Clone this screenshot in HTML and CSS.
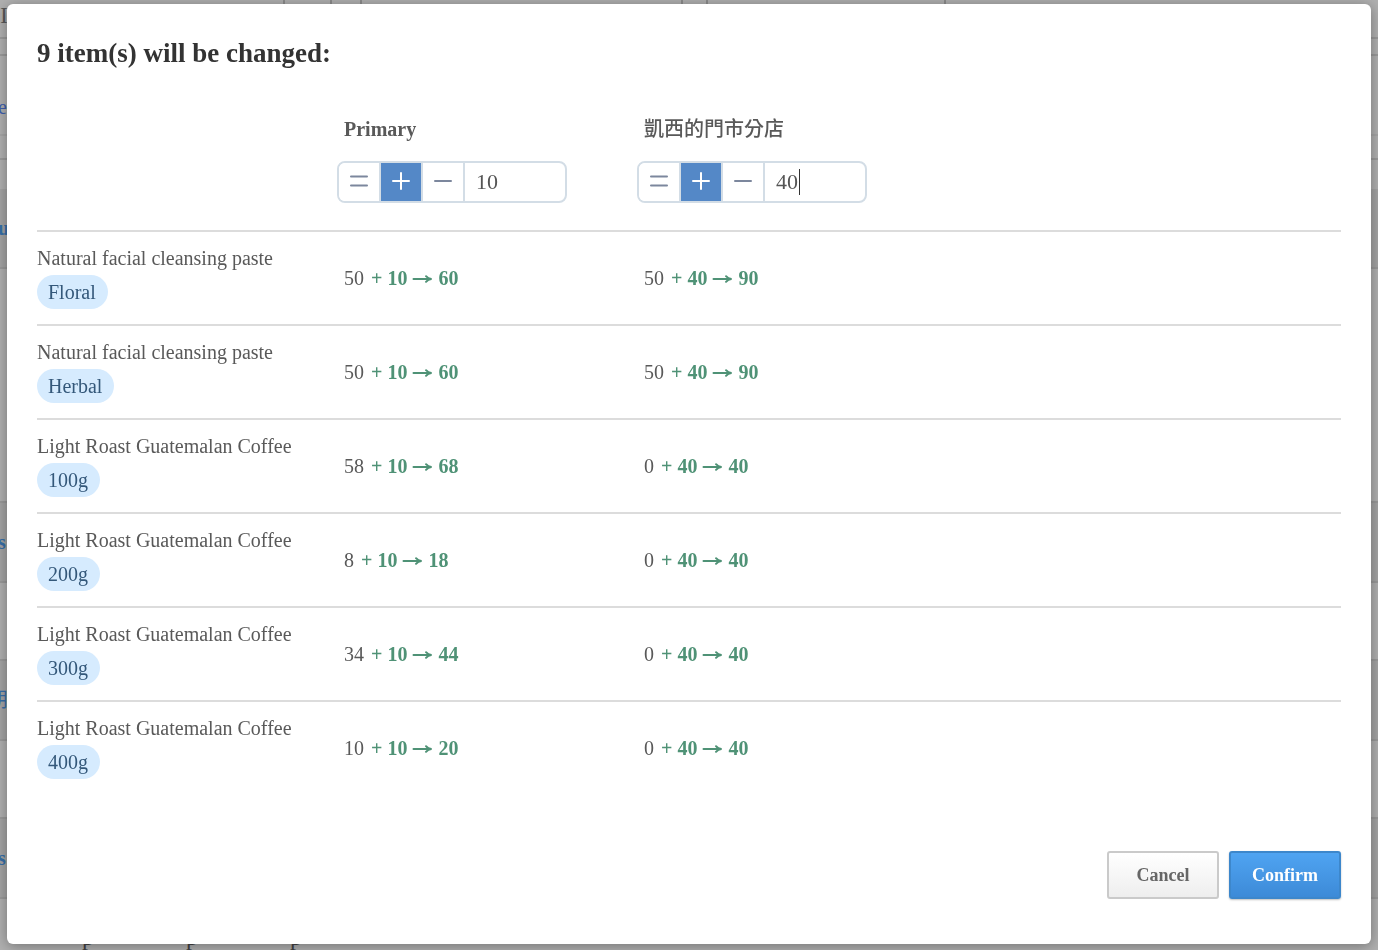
FILE: index.html
```html
<!DOCTYPE html>
<html lang="en">
<head>
    <meta charset="UTF-8">
    <meta name="viewport" content="width=device-width, initial-scale=1.0">
    <title>Update quantity</title>
    <link rel="stylesheet" href="styles.css">
</head>
<body>

    <svg width="0" height="0" class="sprite">
        <symbol id="arrow" viewBox="0 0 21 12"><path d="M1.5 6H19M14 3.2Q16 5.6 19.3 6Q16 6.4 14 8.8"/></symbol>
    </svg>

    <!-- product list behind the dialog -->
    <div class="page" aria-hidden="true">
        <div class="page-row toolbar">
            <span class="label">I</span>
            <span class="tab first"></span><span class="tab second"></span><span class="tab third"></span><span class="tab fourth"></span><span class="tab fifth"></span><span class="tab last"></span>
        </div>
        <div class="page-row thin"></div>
        <div class="page-row filters"><span class="link">e</span></div>
        <div class="page-row head"></div>
        <div class="page-gap"></div>
        <div class="page-row group"><span class="link bold">u</span></div>
        <div class="page-row tall"></div>
        <div class="page-row group"><span class="link bold">s</span></div>
        <div class="page-row item"></div>
        <div class="page-row group"><span class="link wide">朋</span></div>
        <div class="page-row item"></div>
        <div class="page-row group"><span class="link bold">s</span></div>
        <div class="page-foot"><span>p</span><span>p</span><span>p</span></div>
    </div>

    <div class="overlay">
        <div class="modal" role="dialog" aria-labelledby="modalTitle">
            <h1 id="modalTitle">9 item(s) will be changed:</h1>

            <table class="changes">
                <colgroup>
                    <col class="col-name">
                    <col class="col-stock">
                    <col class="col-stock">
                    <col>
                </colgroup>
                <thead>
                    <tr class="locations">
                        <td></td>
                        <th scope="col"><label for="qtyPrimary">Primary</label></th>
                        <th scope="col"><label for="qtyBranch" class="cjk">凱西的門市分店</label></th>
                        <td></td>
                    </tr>
                    <tr class="steppers">
                        <td></td>
                        <td>
                            <div class="stepper">
                                <button type="button" aria-label="Set to"><svg width="18" height="18" viewBox="0 0 18 18"><path d="M1 4.5h16M1 13.5h16"/></svg></button>
                                <button type="button" class="active" aria-label="Add"><svg width="18" height="18" viewBox="0 0 18 18"><path d="M1 9h16M9 1v16"/></svg></button>
                                <button type="button" aria-label="Subtract"><svg width="18" height="18" viewBox="0 0 18 18"><path d="M1 9h16"/></svg></button>
                                <input type="text" id="qtyPrimary" value="10">
                            </div>
                        </td>
                        <td>
                            <div class="stepper">
                                <button type="button" aria-label="Set to"><svg width="18" height="18" viewBox="0 0 18 18"><path d="M1 4.5h16M1 13.5h16"/></svg></button>
                                <button type="button" class="active" aria-label="Add"><svg width="18" height="18" viewBox="0 0 18 18"><path d="M1 9h16M9 1v16"/></svg></button>
                                <button type="button" aria-label="Subtract"><svg width="18" height="18" viewBox="0 0 18 18"><path d="M1 9h16"/></svg></button>
                                <input type="text" id="qtyBranch" value="40">
                                <span class="caret"></span>
                            </div>
                        </td>
                        <td></td>
                    </tr>
                </thead>
                <tbody>
                    <tr>
                        <td class="product"><div class="name">Natural facial cleansing paste</div><span class="tag">Floral</span></td>
                        <td class="stock">50 <strong>+ 10 <svg class="arrow" role="img" aria-label="to"><use href="#arrow"/></svg> 60</strong></td>
                        <td class="stock">50 <strong>+ 40 <svg class="arrow" role="img" aria-label="to"><use href="#arrow"/></svg> 90</strong></td>
                        <td></td>
                    </tr>
                    <tr>
                        <td class="product"><div class="name">Natural facial cleansing paste</div><span class="tag">Herbal</span></td>
                        <td class="stock">50 <strong>+ 10 <svg class="arrow" role="img" aria-label="to"><use href="#arrow"/></svg> 60</strong></td>
                        <td class="stock">50 <strong>+ 40 <svg class="arrow" role="img" aria-label="to"><use href="#arrow"/></svg> 90</strong></td>
                        <td></td>
                    </tr>
                    <tr>
                        <td class="product"><div class="name">Light Roast Guatemalan Coffee</div><span class="tag">100g</span></td>
                        <td class="stock">58 <strong>+ 10 <svg class="arrow" role="img" aria-label="to"><use href="#arrow"/></svg> 68</strong></td>
                        <td class="stock">0 <strong>+ 40 <svg class="arrow" role="img" aria-label="to"><use href="#arrow"/></svg> 40</strong></td>
                        <td></td>
                    </tr>
                    <tr>
                        <td class="product"><div class="name">Light Roast Guatemalan Coffee</div><span class="tag">200g</span></td>
                        <td class="stock">8 <strong>+ 10 <svg class="arrow" role="img" aria-label="to"><use href="#arrow"/></svg> 18</strong></td>
                        <td class="stock">0 <strong>+ 40 <svg class="arrow" role="img" aria-label="to"><use href="#arrow"/></svg> 40</strong></td>
                        <td></td>
                    </tr>
                    <tr>
                        <td class="product"><div class="name">Light Roast Guatemalan Coffee</div><span class="tag">300g</span></td>
                        <td class="stock">34 <strong>+ 10 <svg class="arrow" role="img" aria-label="to"><use href="#arrow"/></svg> 44</strong></td>
                        <td class="stock">0 <strong>+ 40 <svg class="arrow" role="img" aria-label="to"><use href="#arrow"/></svg> 40</strong></td>
                        <td></td>
                    </tr>
                    <tr>
                        <td class="product"><div class="name">Light Roast Guatemalan Coffee</div><span class="tag">400g</span></td>
                        <td class="stock">10 <strong>+ 10 <svg class="arrow" role="img" aria-label="to"><use href="#arrow"/></svg> 20</strong></td>
                        <td class="stock">0 <strong>+ 40 <svg class="arrow" role="img" aria-label="to"><use href="#arrow"/></svg> 40</strong></td>
                        <td></td>
                    </tr>
                </tbody>
            </table>

            <div class="actions">
                <button type="button" class="btn">Cancel</button>
                <button type="button" class="btn btn-primary">Confirm</button>
            </div>
        </div>
    </div>

</body>
</html>
```
FILE: styles.css
```css
* {
    box-sizing: border-box;
}

body {
    margin: 0;
    background-color: #b0b0b0;
    color: #595959;
    font-family: "Liberation Serif", "Noto Sans CJK TC", serif;
    font-size: 20px;
    overflow: hidden;
}

.sprite {
    display: block;
}

/* page behind */
.page {
    height: 100vh;
    overflow: hidden;
}

.page-row {
    display: flex;
    align-items: center;
    height: 79px;
    border-bottom: 2px solid #9a9a9a;
}

.page-row.toolbar {
    height: 39px;
    align-items: stretch;
}

.page-row.thin {
    height: 17px;
}

.page-row.filters {
    height: 80px;
    padding-top: 24px;
    border-color: #a6a6a6;
}

.page-row.head {
    height: 24px;
}

.page-gap {
    height: 29px;
}

.page-row.group {
    height: 80px;
    background-color: #a4a4a4;
}

.page-row.tall {
    height: 234px;
}

.page-row.item {
    height: 78px;
}

.label {
    width: 6px;
    line-height: 30px;
    font-size: 24px;
}

.tab {
    border-right: 2px solid #8c8c8c;
}

.tab.first {
    width: 279px;
}

.tab.second {
    width: 47px;
}

.tab.third {
    width: 30px;
}

.tab.fourth {
    width: 321px;
}

.tab.fifth {
    width: 25px;
}

.tab.last {
    width: 238px;
}

.link {
    margin-left: -2px;
    color: #3f5fae;
}

.link.bold {
    color: #376fa8;
    font-weight: bold;
}

.link.wide {
    margin-left: -12px;
    padding-bottom: 4px;
    color: #376fa8;
}

.page-foot {
    display: flex;
    gap: 92px;
    padding: 24px 82px;
    color: #444;
    font-size: 24px;
    line-height: 28px;
}

/* dialog */
.overlay {
    position: fixed;
    inset: 0;
    padding: 4px 7px 6px;
}

.modal {
    padding: 30px 30px 45px;
    background-color: #fff;
    border-radius: 6px;
    box-shadow: 0 2px 14px rgba(0, 0, 0, 0.35);
}

h1 {
    margin: 0 0 38px;
    color: #333;
    font-size: 27px;
    line-height: 38px;
}

.changes {
    width: 100%;
    table-layout: fixed;
    border-spacing: 0;
}

.col-name,
.col-stock {
    width: 300px;
}

th,
td {
    padding: 0;
    text-align: left;
}

.locations th {
    padding: 0 7px 13px;
    line-height: 38px;
}

.locations label {
    display: block;
}

.cjk {
    font-weight: 500;
}

.steppers td {
    padding-bottom: 27px;
}

.stepper {
    position: relative;
    display: flex;
    width: 230px;
    height: 42px;
    border: 2px solid #d3dde6;
    border-radius: 8px;
    overflow: hidden;
}

.stepper button {
    display: flex;
    align-items: center;
    justify-content: center;
    flex: none;
    width: 42px;
    padding: 0 0 2px;
    border: 0;
    border-right: 2px solid #d3dde6;
    background-color: #fff;
    cursor: pointer;
}

.stepper button.active {
    background-color: #5488c7;
    background-clip: padding-box;
}

.stepper svg {
    fill: none;
    stroke: #7c879d;
    stroke-width: 2;
    stroke-linecap: round;
}

.stepper .active svg {
    stroke: #fff;
}

.stepper input {
    flex: 1;
    min-width: 0;
    padding: 0 11px;
    border: 0;
    outline: 0;
    background-color: transparent;
    color: #555;
    font-family: inherit;
    font-size: 22px;
}

.caret {
    position: absolute;
    top: 6px;
    left: 160px;
    width: 1px;
    height: 26px;
    background-color: #333;
}

tbody td {
    height: 94px;
    border-top: 2px solid #dcdcdc;
}

.product {
    padding-bottom: 2px;
}

.name {
    margin-bottom: 5px;
    line-height: 24px;
}

.tag {
    display: block;
    width: fit-content;
    padding: 0 12px 0 11px;
    border-radius: 17px;
    background-color: #d6ebfe;
    color: #34587a;
    line-height: 34px;
}

.stock {
    padding: 0 7px;
}

.stock strong {
    margin-left: 2px;
    color: #4f9276;
}

.arrow {
    width: 21px;
    height: 12px;
    fill: none;
    stroke: currentColor;
    stroke-width: 2;
    stroke-linecap: round;
}

.actions {
    display: flex;
    justify-content: flex-end;
    gap: 10px;
    margin-top: 57px;
}

.btn {
    width: 112px;
    height: 48px;
    padding: 0;
    border: 2px solid #cacaca;
    border-radius: 3px;
    background: linear-gradient(#fff, #eee);
    color: #666;
    font-family: inherit;
    font-size: 18px;
    font-weight: bold;
    cursor: pointer;
}

.btn-primary {
    border-color: #3d87cb;
    background: linear-gradient(#50a5f3, #3c89d6);
    background-origin: border-box;
    box-shadow: 0 1px 2px rgba(0, 0, 0, 0.25);
    color: #fff;
}
```
